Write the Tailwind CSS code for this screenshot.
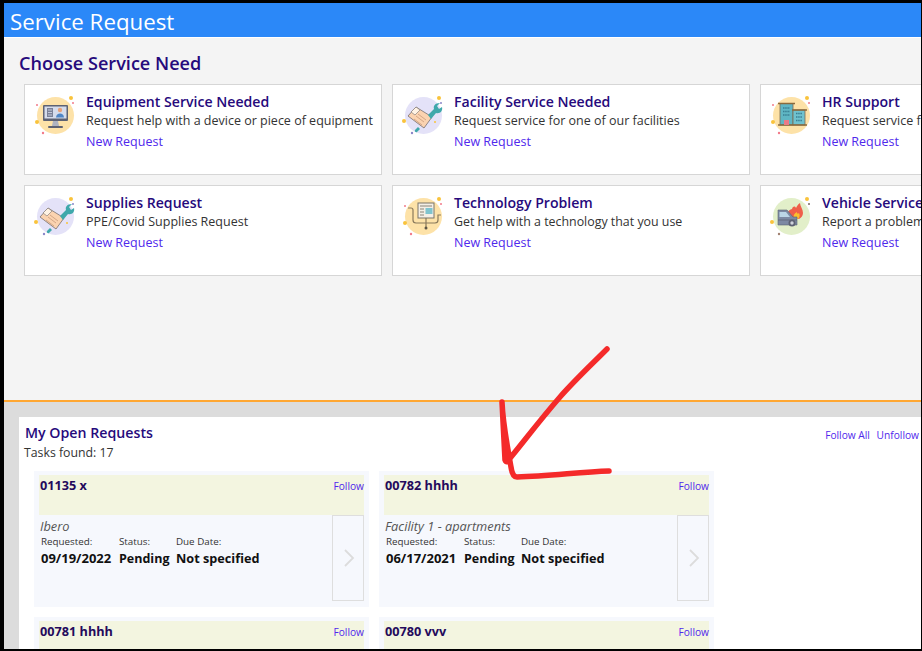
<!DOCTYPE html>
<html>
<head>
<meta charset="utf-8">
<script src="https://cdn.jsdelivr.net/npm/@tailwindcss/browser@4"></script>
</head>
<body class="bg-black overflow-hidden font-['Open_Sans','Noto_Sans',sans-serif]">
<div class="relative w-[922px] h-[651px] overflow-hidden pt-[3px] pl-[4px] pr-[1px] pb-[2px]">
  <div class="h-full flex flex-col overflow-hidden bg-white">
    <header class="h-[34px] shrink-0 bg-[#2b88f8] pl-[6px] text-[22.300px] leading-[38px] text-white">Service Request</header>
    <section class="h-[364px] shrink-0 bg-[#f4f4f4] mt-[1px] border-b-2 border-[#ffa733] overflow-hidden pl-[15px]">
      <h1 class="text-[18.100px] leading-[24px] mt-[13px] font-semibold text-[#260a7c]">Choose Service Need</h1>
      <div class="grid grid-cols-[358px_358px_358px] grid-rows-[91px_91px] gap-[10px] ml-[5px] mt-[9px] w-[1100px]">

        <article class="bg-white border border-[#d6d6d6] flex">
          <svg class="w-[48px] h-[48px] ml-[8px] mt-[7px] shrink-0" viewBox="0 0 48 48"><circle cx="22.5" cy="23.500" r="18.500" fill="#fde2a8"/><circle cx="38" cy="6" r="2" fill="#f9c33c"/><circle cx="40" cy="11" r="1" fill="#f27a8a"/><circle cx="4" cy="13" r="1" fill="#f27a8a"/><circle cx="4" cy="30" r="2" fill="#f9c33c"/><circle cx="10" cy="41" r="1.200" fill="#f27a8a"/><rect x="10" y="13" width="25" height="16" rx="1" fill="#5d6273"/><rect x="11.500" y="14.500" width="22" height="12" fill="#d5dcec"/><rect x="14" y="16" width="6" height="9" fill="#7b8298"/><path d="M15 18h4M15 20.500h4M15 23h4" stroke="#d5dcec" stroke-width=".8"/><circle cx="27" cy="18" r="2.200" fill="#e7a27a"/><path d="M23 25.500c0-5.500 8-5.500 8 0z" fill="#4f86c6"/><path d="M20 29h5l1 5h-7z" fill="#aeb3c0"/><rect x="15" y="34" width="15" height="2" rx="1" fill="#5d6273"/></svg>
          <div class="ml-[5px] pt-[6px]">
            <h2 class="text-[14.100px] leading-[21px] font-semibold text-[#260a7c]">Equipment Service Needed</h2>
            <p class="text-[12.500px] leading-[17px] text-[#333] whitespace-nowrap">Request help with a device or piece of equipment</p>
            <a class="block text-[12.500px] leading-[17px] mt-[4px] text-[#4f28ec]">New Request</a>
          </div>
        </article>

        <article class="bg-white border border-[#d6d6d6] flex">
          <svg class="w-[48px] h-[48px] ml-[8px] mt-[7px] shrink-0" viewBox="0 0 48 48"><circle cx="22.5" cy="23.500" r="18.500" fill="#e4e2f8"/><circle cx="38" cy="6" r="2" fill="#f9c33c"/><circle cx="40" cy="11" r="1" fill="#8b86c9"/><circle cx="3" cy="29" r="2" fill="#f9c33c"/><circle cx="11" cy="41" r="1.200" fill="#8b86c9"/><circle cx="34" cy="30" r="1" fill="#f9c33c"/><path d="M17 35l-3 3c-1 1 1 3 2 2l3-3z" fill="#3fa8ab"/><path d="M7 24l8-9 16 10-8 11z" fill="#fbd3b0" stroke="#77706e" stroke-width=".8"/><path d="M10 20l5-5 4 3-5 5z" fill="#fff3e4" stroke="#77706e" stroke-width=".6"/><path d="M15 24l8 6M17 22l8 6M13 27l8 6" stroke="#c99c7c" stroke-width=".8"/><path d="M27 23l6-6c-1-3 1-6 6-6l-3 3 2 3 3-2c1 4-2 7-6 6l-5 6z" fill="#3fa8ab"/></svg>
          <div class="ml-[5px] pt-[6px]">
            <h2 class="text-[14.100px] leading-[21px] font-semibold text-[#260a7c]">Facility Service Needed</h2>
            <p class="text-[12.500px] leading-[17px] text-[#333] whitespace-nowrap">Request service for one of our facilities</p>
            <a class="block text-[12.500px] leading-[17px] mt-[4px] text-[#4f28ec]">New Request</a>
          </div>
        </article>

        <article class="bg-white border border-[#d6d6d6] flex">
          <svg class="w-[48px] h-[48px] ml-[8px] mt-[7px] shrink-0" viewBox="0 0 48 48"><circle cx="22.5" cy="23.500" r="18.500" fill="#fde2a8"/><circle cx="38" cy="6" r="2" fill="#f9c33c"/><circle cx="40" cy="11" r="1" fill="#f27a8a"/><circle cx="4" cy="13" r="1" fill="#f27a8a"/><circle cx="4" cy="30" r="2" fill="#f9c33c"/><circle cx="10" cy="41" r="1.200" fill="#f27a8a"/><rect x="11" y="11.500" width="13" height="21.500" fill="#5fb6c4" stroke="#7a6a50" stroke-width=".8"/><rect x="24" y="18" width="12" height="15" fill="#6fc2cf" stroke="#7a6a50" stroke-width=".8"/><path d="M9 11.500h17M23 18h15M9 33h29" stroke="#8a6a3c" stroke-width="1.500"/><path d="M14 16h7M14 19.500h7M14 23h7M27 21.500h6M27 25h6M27 28.500h6" stroke="#3a7f93" stroke-width="1.600" stroke-dasharray="1.500 .7"/><rect x="15" y="28" width="5" height="5" fill="#ea7a86"/></svg>
          <div class="ml-[5px] pt-[6px]">
            <h2 class="text-[14.100px] leading-[21px] font-semibold text-[#260a7c]">HR Support</h2>
            <p class="text-[12.500px] leading-[17px] text-[#333] whitespace-nowrap">Request service for one of our facilities</p>
            <a class="block text-[12.500px] leading-[17px] mt-[4px] text-[#4f28ec]">New Request</a>
          </div>
        </article>

        <article class="bg-white border border-[#d6d6d6] flex">
          <svg class="w-[48px] h-[48px] ml-[8px] mt-[7px] shrink-0" viewBox="0 0 48 48"><circle cx="22.5" cy="23.500" r="18.500" fill="#e4e2f8"/><circle cx="38" cy="6" r="2" fill="#f9c33c"/><circle cx="40" cy="11" r="1" fill="#8b86c9"/><circle cx="3" cy="29" r="2" fill="#f9c33c"/><circle cx="11" cy="41" r="1.200" fill="#8b86c9"/><circle cx="34" cy="30" r="1" fill="#f9c33c"/><path d="M17 35l-3 3c-1 1 1 3 2 2l3-3z" fill="#3fa8ab"/><path d="M7 24l8-9 16 10-8 11z" fill="#fbd3b0" stroke="#77706e" stroke-width=".8"/><path d="M10 20l5-5 4 3-5 5z" fill="#fff3e4" stroke="#77706e" stroke-width=".6"/><path d="M15 24l8 6M17 22l8 6M13 27l8 6" stroke="#c99c7c" stroke-width=".8"/><path d="M27 23l6-6c-1-3 1-6 6-6l-3 3 2 3 3-2c1 4-2 7-6 6l-5 6z" fill="#3fa8ab"/></svg>
          <div class="ml-[5px] pt-[6px]">
            <h2 class="text-[14.100px] leading-[21px] font-semibold text-[#260a7c]">Supplies Request</h2>
            <p class="text-[12.500px] leading-[17px] text-[#333] whitespace-nowrap">PPE/Covid Supplies Request</p>
            <a class="block text-[12.500px] leading-[17px] mt-[4px] text-[#4f28ec]">New Request</a>
          </div>
        </article>

        <article class="bg-white border border-[#d6d6d6] flex">
          <svg class="w-[48px] h-[48px] ml-[8px] mt-[7px] shrink-0" viewBox="0 0 48 48"><circle cx="22.5" cy="23.500" r="18.500" fill="#fde2a8"/><circle cx="38" cy="6" r="2" fill="#f9c33c"/><circle cx="40" cy="11" r="1" fill="#f27a8a"/><circle cx="4" cy="13" r="1" fill="#f27a8a"/><circle cx="4" cy="30" r="2" fill="#f9c33c"/><circle cx="10" cy="41" r="1.200" fill="#f27a8a"/><path d="M7 15h3a2 2 0 0 1 2 2v10a3 3 0 0 0 3 3h19a3 3 0 0 0 3-3v-5h3M25 25v9" fill="none" stroke="#8a7a5c" stroke-width="1.200"/><rect x="17" y="10" width="16" height="15" fill="#f4efe6" stroke="#7a7468"/><path d="M19 13h12M19 16h4M19 19h4M19 22h4" stroke="#8a8478"/><rect x="24.500" y="15" width="7" height="6" fill="#7fc4cf"/><circle cx="25" cy="35" r="1.500" fill="#5d5546"/></svg>
          <div class="ml-[5px] pt-[6px]">
            <h2 class="text-[14.100px] leading-[21px] font-semibold text-[#260a7c]">Technology Problem</h2>
            <p class="text-[12.400px] leading-[17px] text-[#333] whitespace-nowrap">Get help with a technology that you use</p>
            <a class="block text-[12.500px] leading-[17px] mt-[4px] text-[#4f28ec]">New Request</a>
          </div>
        </article>

        <article class="bg-white border border-[#d6d6d6] flex">
          <svg class="w-[48px] h-[48px] ml-[8px] mt-[7px] shrink-0" viewBox="0 0 48 48"><circle cx="22.5" cy="23.500" r="18.500" fill="#e2efc9"/><circle cx="38" cy="6" r="2" fill="#f9c33c"/><circle cx="40" cy="11" r="1" fill="#7a6a60"/><circle cx="3" cy="29" r="2" fill="#f9c33c"/><circle cx="10" cy="41" r="1.200" fill="#a08070"/><path d="M19 25c-2-4 0-8 4-9 1-3 3-3 4-1 1-2 2-4 4-5 0 3 3 6 3 10 0 3-2 5-4 6z" fill="#ef5f4a"/><path d="M25 25c-1-3 1-5 3-6 0 2 1 2 2 1 1 2 1 4-1 6z" fill="#fbc02d"/><path d="M9 17h9l6 7h4v8H9z" fill="#7d8aa3" stroke="#5d6273" stroke-width=".6"/><path d="M10.500 19h6.500l4 5H10.500z" fill="#bcd6e6"/><path d="M9 27h19" stroke="#5d6273" stroke-width=".8"/><circle cx="23" cy="30" r="3.500" fill="#5d6273"/><circle cx="23" cy="30" r="1.700" fill="#cfd3dc"/></svg>
          <div class="ml-[5px] pt-[6px]">
            <h2 class="text-[14.100px] leading-[21px] font-semibold text-[#260a7c] whitespace-nowrap">Vehicle Service</h2>
            <p class="text-[12.500px] leading-[17px] text-[#333] whitespace-nowrap">Report a problem with a vehicle</p>
            <a class="block text-[12.500px] leading-[17px] mt-[4px] text-[#4f28ec]">New Request</a>
          </div>
        </article>
      </div>
    </section>

    <section class="flex-1 min-h-0 bg-[#dcdcdc] pt-[15px] pl-[15px]">
      <div class="h-full bg-white pl-[5px] overflow-hidden">
        <div class="flex justify-between items-start h-[35px]">
          <div class="pl-[1px]">
            <h2 class="text-[14.200px] leading-[19px] mt-[6px] font-semibold text-[#260a7c]">My Open Requests</h2>
            <p class="text-[12.300px] leading-[17px] -ml-[1px] mt-[2px] text-[#333]">Tasks found: 17</p>
          </div>
          <div class="text-[10.200px] leading-[14px] mt-[11px] pr-[2px] text-[#4f28ec] whitespace-nowrap">Follow All <span class="ml-[4px]">Unfollow</span></div>
        </div>
        <div class="grid grid-cols-[335px_335px] gap-[10px] ml-[10px] mt-[19px]">

          <article class="h-[136px] bg-[#f6f8fd] px-[5px] pt-[4px]">
            <div class="h-[40px] bg-[#f3f5e0] flex justify-between pl-[1px]">
              <h3 class="text-[12.700px] leading-[18px] mt-[1px] font-bold text-[#240a5c]">01135 x</h3>
              <a class="text-[10.200px] leading-[14px] mt-[4px] text-[#4f28ec]">Follow</a>
            </div>
            <div class="flex justify-between">
              <div class="pl-[1px] pt-[3px]">
                <p class="text-[12.800px] leading-[17px] italic text-[#555]">Ibero</p>
                <div class="grid grid-cols-[71px_50px_auto] justify-start items-baseline gap-x-[7px] pl-[1px]">
                  <span class="text-[9.800px] leading-[14px] text-[#333]">Requested:</span><span class="text-[9.800px] leading-[14px] text-[#333]">Status:</span><span class="text-[9.800px] leading-[14px] text-[#333]">Due Date:</span>
                  <b class="text-[13px] leading-[18px] font-bold text-[#111] whitespace-nowrap">09/19/2022</b><b class="text-[12.500px] leading-[18px] font-bold text-[#111]">Pending</b><b class="text-[12.700px] leading-[18px] font-bold text-[#111]">Not specified</b>
                </div>
              </div>
              <div class="w-[32px] h-[86px] border border-[#dedede] flex items-center justify-center">
                <svg class="w-[12px] h-[18px] ml-[2px]" viewBox="0 0 12 18"><path d="M2 1l8 8-8 8" fill="none" stroke="#dcdcdc" stroke-width="1.800"/></svg>
              </div>
            </div>
          </article>

          <article class="h-[136px] bg-[#f6f8fd] px-[5px] pt-[4px]">
            <div class="h-[40px] bg-[#f3f5e0] flex justify-between pl-[1px]">
              <h3 class="text-[12.700px] leading-[18px] mt-[1px] font-bold text-[#240a5c]">00782 hhhh</h3>
              <a class="text-[10.200px] leading-[14px] mt-[4px] text-[#4f28ec]">Follow</a>
            </div>
            <div class="flex justify-between">
              <div class="pl-[1px] pt-[3px]">
                <p class="text-[12.800px] leading-[17px] italic text-[#555]">Facility 1 - apartments</p>
                <div class="grid grid-cols-[71px_50px_auto] justify-start items-baseline gap-x-[7px] pl-[1px]">
                  <span class="text-[9.800px] leading-[14px] text-[#333]">Requested:</span><span class="text-[9.800px] leading-[14px] text-[#333]">Status:</span><span class="text-[9.800px] leading-[14px] text-[#333]">Due Date:</span>
                  <b class="text-[13px] leading-[18px] font-bold text-[#111] whitespace-nowrap">06/17/2021</b><b class="text-[12.500px] leading-[18px] font-bold text-[#111]">Pending</b><b class="text-[12.700px] leading-[18px] font-bold text-[#111]">Not specified</b>
                </div>
              </div>
              <div class="w-[32px] h-[86px] border border-[#dedede] flex items-center justify-center">
                <svg class="w-[12px] h-[18px] ml-[2px]" viewBox="0 0 12 18"><path d="M2 1l8 8-8 8" fill="none" stroke="#dcdcdc" stroke-width="1.800"/></svg>
              </div>
            </div>
          </article>

          <article class="h-[136px] bg-[#f6f8fd] px-[5px] pt-[4px]">
            <div class="h-[40px] bg-[#f3f5e0] flex justify-between pl-[1px]">
              <h3 class="text-[12.700px] leading-[18px] mt-[1px] font-bold text-[#240a5c]">00781 hhhh</h3>
              <a class="text-[10.200px] leading-[14px] mt-[4px] text-[#4f28ec]">Follow</a>
            </div>
          </article>

          <article class="h-[136px] bg-[#f6f8fd] px-[5px] pt-[4px]">
            <div class="h-[40px] bg-[#f3f5e0] flex justify-between pl-[1px]">
              <h3 class="text-[12.700px] leading-[18px] mt-[1px] font-bold text-[#240a5c]">00780 vvv</h3>
              <a class="text-[10.200px] leading-[14px] mt-[4px] text-[#4f28ec]">Follow</a>
            </div>
          </article>
        </div>
      </div>
    </section>
  </div>
  <svg class="absolute left-0 top-0 w-[922px] h-[651px] pointer-events-none" viewBox="0 0 922 651"><path d="M607 349C590 366 575 380 560 397C540 420 525 440 511 457C508 462 506 463 505 460C504 440 503 420 502 402C503 425 508 450 511 467C512 474 514 477 517 477C550 476 580 472 609 471" fill="none" stroke="#f42a2a" stroke-width="5.500" stroke-linecap="round" stroke-linejoin="round"/></svg>
</div>
</body>
</html>
